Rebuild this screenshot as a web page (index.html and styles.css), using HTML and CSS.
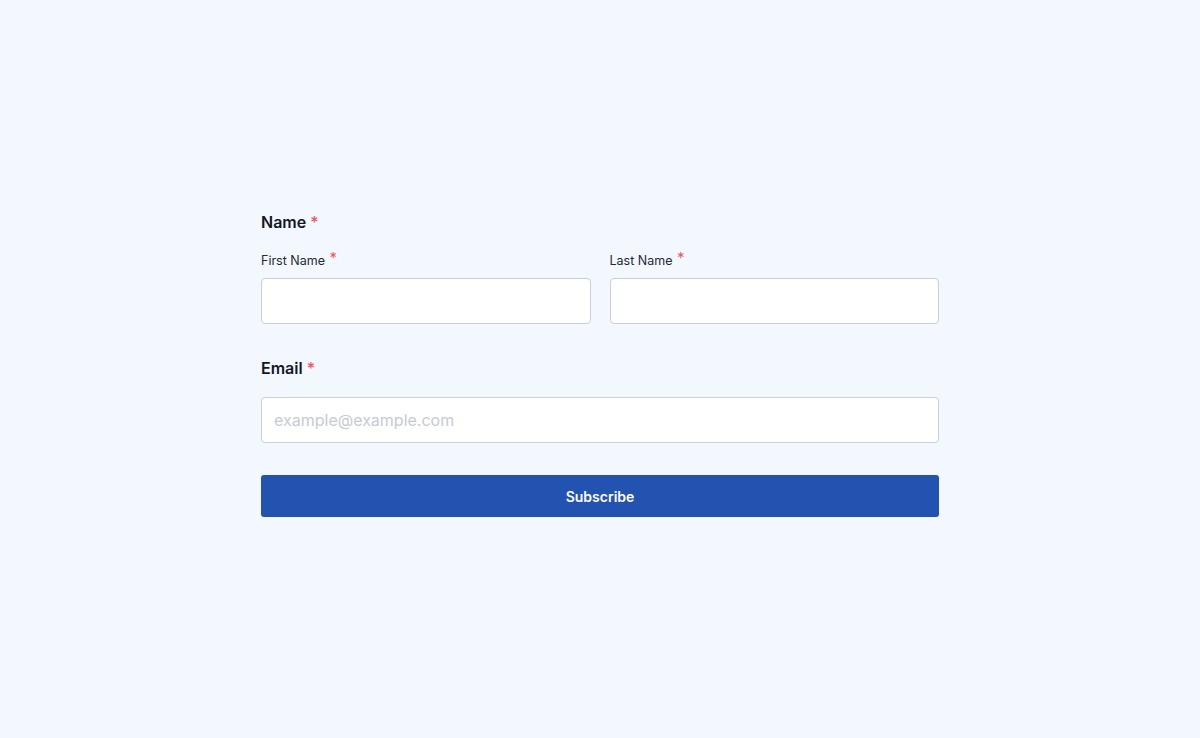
FILE: index.html
```html
<!DOCTYPE html>
<html>
<head>
<meta charset="utf-8">
<link rel="stylesheet" href="styles.css">
</head>
<body>
<main class="page">
  <form class="form">
    <div class="group">
      <div class="label">Name <span class="req">*</span></div>
      <div class="row">
        <div class="field">
          <label class="sublabel">First Name <span class="req">*</span></label>
          <input class="input" type="text">
        </div>
        <div class="field">
          <label class="sublabel">Last Name <span class="req">*</span></label>
          <input class="input" type="text">
        </div>
      </div>
    </div>
    <div class="group email">
      <div class="label">Email <span class="req">*</span></div>
      <input class="input email-input" type="email" placeholder="example@example.com">
    </div>
    <button class="btn" type="button">Subscribe</button>
  </form>
</main>
</body>
</html>
```

FILE: styles.css
```css
html, body {
  margin: 0;
  padding: 0;
  background: #f3f7fe;
  font-family: Inter, "Noto Sans", sans-serif;
  color: #111827;
}
.page {
  display: flex;
  justify-content: center;
  padding-top: 212px;
  height: 738px;
  box-sizing: border-box;
}
.form {
  width: 678px;
  display: flex;
  flex-direction: column;
}
.label {
  font-size: 16px;
  line-height: 20px;
  font-weight: 600;
  color: #111827;
}
.req {
  color: #f4545c;
  font-weight: 500;
}
.row {
  display: flex;
  gap: 19px;
  margin-top: 20px;
}
.field {
  flex: 1;
  display: flex;
  flex-direction: column;
}
.sublabel {
  font-size: 12.5px;
  line-height: 16px;
  color: #1f2937;
  margin-bottom: 9px;
}
.sublabel .req {
  font-size: 15px;
  font-weight: 400;
  margin-left: 1px;
  position: relative;
  top: -2px;
}
.input {
  height: 46px;
  box-sizing: border-box;
  border: 1px solid #c9ced9;
  border-radius: 4px;
  background: #fff;
  padding: 0 12px;
  font-family: inherit;
  font-size: 16px;
  outline: none;
}
.input::placeholder {
  color: #c5cbd6;
}
.email {
  margin-top: 34px;
  display: flex;
  flex-direction: column;
}
.email-input {
  margin-top: 19px;
  height: 46px;
}
.btn {
  margin-top: 32px;
  height: 42px;
  border: none;
  border-radius: 3px;
  background: #2353b1;
  color: #fff;
  font-family: inherit;
  font-size: 14px;
  font-weight: 600;
}
```
